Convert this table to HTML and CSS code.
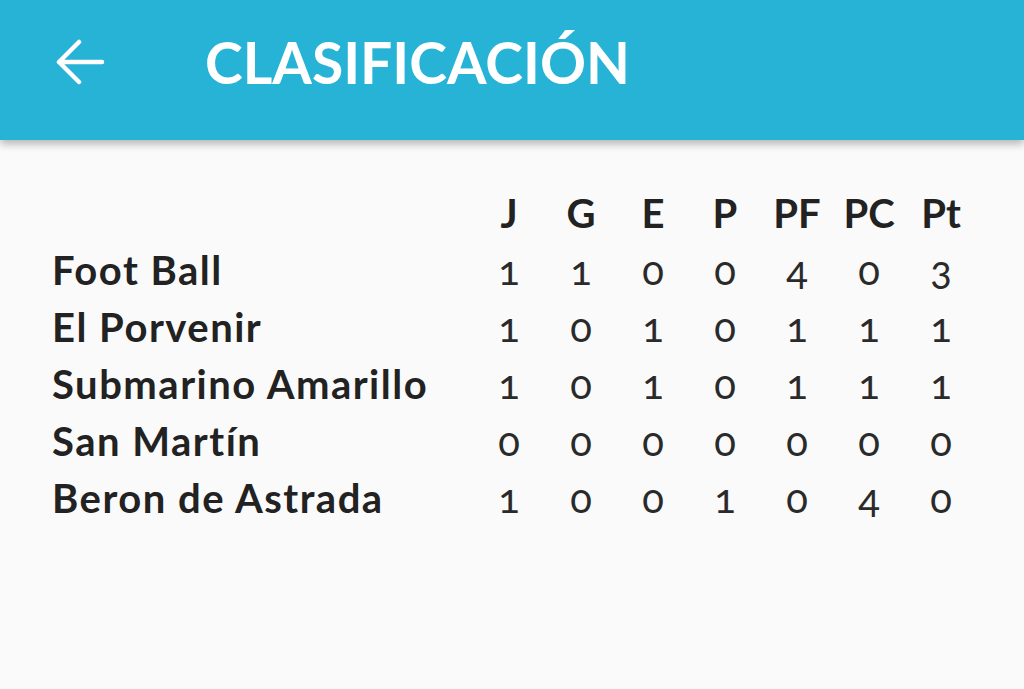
FILE: index.html
```html
<!DOCTYPE html>
<html lang="es">
<head>
<meta charset="utf-8">
<title>Clasificación</title>
<link rel="stylesheet" href="styles.css">
</head>
<body>
<header class="appbar">
  <svg class="back" width="50" height="46" viewBox="0 0 50 46" aria-hidden="true">
    <path d="M47 23H4M24 3L4 23L24 43" fill="none" stroke="#fff" stroke-width="4.5" stroke-linecap="round" stroke-linejoin="round"/>
  </svg>
  <h1 class="title">CLASIFICACIÓN</h1>
</header>
<main class="content">
  <div class="table">
    <div class="cell name"></div>
    <div class="cell head">J</div><div class="cell head">G</div><div class="cell head">E</div><div class="cell head">P</div><div class="cell head">PF</div><div class="cell head">PC</div><div class="cell head">Pt</div>

    <div class="cell name">Foot Ball</div>
    <div class="cell num">1</div><div class="cell num">1</div><div class="cell num">0</div><div class="cell num">0</div><div class="cell num">4</div><div class="cell num">0</div><div class="cell num">3</div>

    <div class="cell name">El Porvenir</div>
    <div class="cell num">1</div><div class="cell num">0</div><div class="cell num">1</div><div class="cell num">0</div><div class="cell num">1</div><div class="cell num">1</div><div class="cell num">1</div>

    <div class="cell name">Submarino Amarillo</div>
    <div class="cell num">1</div><div class="cell num">0</div><div class="cell num">1</div><div class="cell num">0</div><div class="cell num">1</div><div class="cell num">1</div><div class="cell num">1</div>

    <div class="cell name">San Martín</div>
    <div class="cell num">0</div><div class="cell num">0</div><div class="cell num">0</div><div class="cell num">0</div><div class="cell num">0</div><div class="cell num">0</div><div class="cell num">0</div>

    <div class="cell name">Beron de Astrada</div>
    <div class="cell num">1</div><div class="cell num">0</div><div class="cell num">0</div><div class="cell num">1</div><div class="cell num">0</div><div class="cell num">4</div><div class="cell num">0</div>
  </div>
</main>
</body>
</html>
```
FILE: styles.css
```css
html, body {
  margin: 0;
  padding: 0;
}
body {
  background: #fafafa;
  font-family: "Lato", "Noto Sans", sans-serif;
  color: #222222;
  width: 1024px;
  height: 689px;
  overflow: hidden;
}
.appbar {
  height: 140px;
  background: #26b3d6;
  display: flex;
  align-items: center;
  padding-left: 55px;
  padding-bottom: 16px;
  box-sizing: border-box;
  box-shadow: 0 4px 8px rgba(0, 0, 0, 0.28);
  position: relative;
}
.back {
  display: block;
  flex: none;
}
.title {
  margin: 0 0 0 100px;
  color: #ffffff;
  font-size: 57px;
  font-weight: 700;
  line-height: 1;
  letter-spacing: 0;
}
.content {
  padding: 45px 47px 0 52px;
}
.table {
  display: grid;
  grid-template-columns: 1fr repeat(7, 72px);
  grid-auto-rows: 57px;
  line-height: 57px;
  font-size: 40px;
}
.cell {
  white-space: nowrap;
}
.name {
  font-weight: 700;
  letter-spacing: 1.5px;
}
.head {
  font-weight: 700;
  text-align: center;
}
.num {
  font-weight: 400;
  color: #2a2a2a;
  text-align: center;
  font-variant-numeric: oldstyle-nums;
}
```
